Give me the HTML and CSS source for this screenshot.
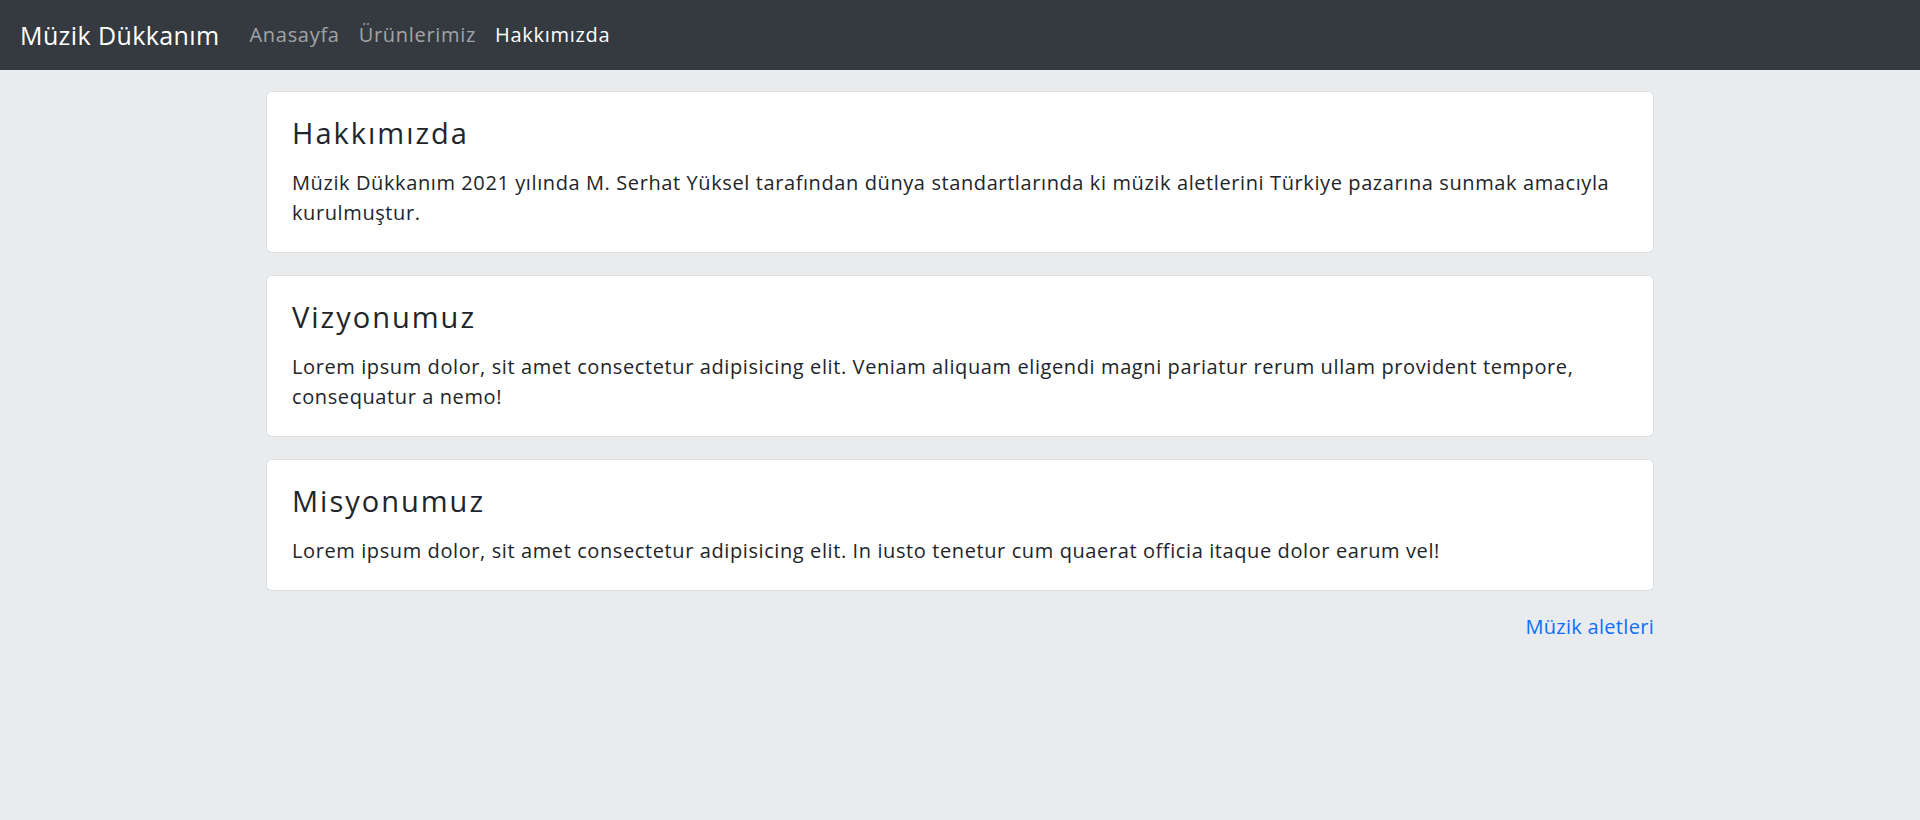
FILE: index.html
```html
<!DOCTYPE html>
<html lang="tr">
<head>
<meta charset="utf-8">
<title>Hakkımızda - Müzik Dükkanım</title>
<link rel="stylesheet" href="styles.css">
</head>
<body>
<nav class="navbar">
  <a class="brand" href="#">Müzik Dükkanım</a>
  <ul class="nav">
    <li><a class="nav-link" href="#">Anasayfa</a></li>
    <li><a class="nav-link" href="#">Ürünlerimiz</a></li>
    <li><a class="nav-link active" href="#">Hakkımızda</a></li>
  </ul>
</nav>
<main class="container">
  <section class="card">
    <h3 class="card-title">Hakkımızda</h3>
    <p class="card-text">Müzik Dükkanım 2021 yılında M. Serhat Yüksel tarafından dünya standartlarında ki müzik aletlerini Türkiye pazarına sunmak amacıyla kurulmuştur.</p>
  </section>
  <section class="card">
    <h3 class="card-title">Vizyonumuz</h3>
    <p class="card-text">Lorem ipsum dolor, sit amet consectetur adipisicing elit. Veniam aliquam eligendi magni pariatur rerum ullam provident tempore, consequatur a nemo!</p>
  </section>
  <section class="card">
    <h3 class="card-title">Misyonumuz</h3>
    <p class="card-text">Lorem ipsum dolor, sit amet consectetur adipisicing elit. In iusto tenetur cum quaerat officia itaque dolor earum vel!</p>
  </section>
  <div class="footer-link">
    <a href="#">Müzik aletleri</a>
  </div>
</main>
</body>
</html>
```
FILE: styles.css
```css
* { box-sizing: border-box; }
html, body { margin: 0; padding: 0; }
body {
  background: #e9ecef;
  color: #212529;
  font-family: "Open Sans", "Noto Sans", sans-serif;
  font-size: 20px;
  line-height: 30px;
  letter-spacing: 0.6px;
  min-height: 820px;
}
a { text-decoration: none; }

.navbar {
  height: 70px;
  background: #343a40;
  display: flex;
  align-items: center;
  padding: 0 20px;
}
.brand {
  color: #fff;
  font-size: 25px;
  line-height: 30px;
  letter-spacing: 0.4px;
  margin-right: 20px;
}
.nav {
  display: flex;
  list-style: none;
  margin: 0;
  padding: 0;
}
.nav-link {
  display: block;
  color: rgba(255,255,255,.55);
  font-size: 20px;
  line-height: 28px;
  letter-spacing: 0.7px;
  padding: 0 9px 0 10px;
}
.nav-link.active { color: #fff; }

.container {
  width: 1388px;
  margin: 21px auto 0;
  display: flex;
  flex-direction: column;
  gap: 22px;
}
.card {
  background: #fff;
  border: 1px solid rgba(0,0,0,.125);
  border-radius: 6px;
  padding: 24px 25px;
}
.card-title {
  margin: 0 0 18px;
  font-size: 29px;
  line-height: 34px;
  font-weight: 500;
  letter-spacing: 2px;
}
.card-text { margin: 0; }
.footer-link {
  text-align: right;
  margin-top: -1px;
}
.footer-link a {
  color: #0d6efd;
  letter-spacing: 0.3px;
}
```
